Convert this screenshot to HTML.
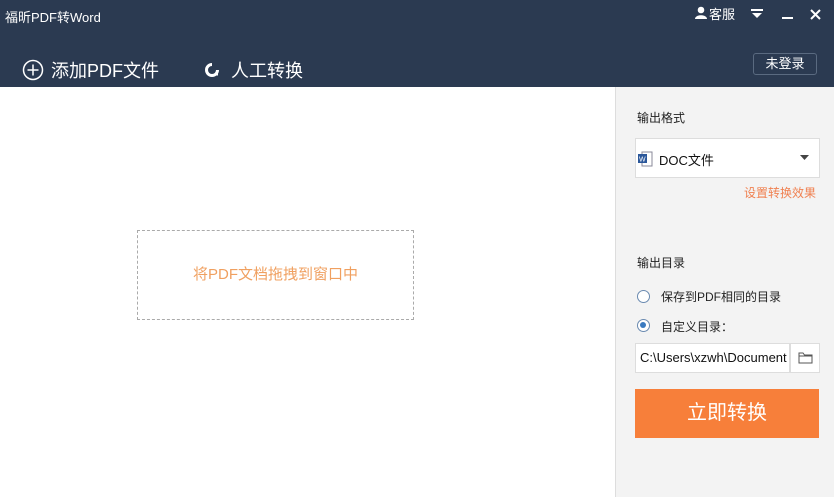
<!DOCTYPE html>
<html><head><meta charset="utf-8"><style>
*{margin:0;padding:0;box-sizing:border-box}
body{width:834px;height:497px;overflow:hidden;background:#fff;font-family:"Liberation Sans","Noto Sans CJK SC",sans-serif;position:relative}
.hd{position:absolute;left:0;top:0;width:834px;height:87px;background:#2b3a51;color:#fff}
.abs{position:absolute}
.rp{position:absolute;left:615px;top:87px;width:219px;height:410px;background:#f3f3f3;border-left:1px solid #ddd}
</style></head><body>
<div class="hd">
<div class="abs" style="left:5px;top:7px;font-size:13px">福昕PDF转Word</div>
<svg class="abs" style="left:22px;top:59px" width="22" height="22"><circle cx="11" cy="11" r="9.5" fill="none" stroke="#fff" stroke-width="1.5"/><path d="M11 5.5V16.5M5.5 11H16.5" stroke="#fff" stroke-width="1.5"/></svg>
<div class="abs" style="left:51px;top:57px;font-size:18px">添加PDF文件</div>
<svg class="abs" style="left:205px;top:63px" width="14" height="14"><path d="M7 1.5A5.5 5.5 0 1 0 12.5 7" fill="none" stroke="#fff" stroke-width="3"/><path d="M9 12.5l4 0 0-4z" fill="#fff"/></svg>
<div class="abs" style="left:231px;top:57px;font-size:18px">人工转换</div>
<svg class="abs" style="left:694px;top:6px" width="14" height="13"><circle cx="7" cy="4" r="3.3" fill="#fff"/><path d="M1 13C1 8 13 8 13 13z" fill="#fff"/></svg>
<div class="abs" style="left:709px;top:4px;font-size:13px">客服</div>
<svg class="abs" style="left:751px;top:9px" width="12" height="9"><rect x="0" y="0" width="12" height="2" fill="#fff"/><path d="M1 4H11L6 9z" fill="#fff"/></svg>
<div class="abs" style="left:782px;top:17px;width:11px;height:2px;background:#fff"></div>
<svg class="abs" style="left:810px;top:9px" width="11" height="11"><path d="M1 1L10 10M10 1L1 10" stroke="#fff" stroke-width="2"/></svg>
<div class="abs" style="left:753px;top:53px;width:64px;height:22px;border:1px solid #5a6a80;border-radius:3px;font-size:13px;text-align:center;line-height:20px">未登录</div>
</div>
<div class="abs" style="left:137px;top:230px;width:277px;height:90px;border:1px dashed #aaa;color:#f0a060;font-size:15px;text-align:center;line-height:88px">将PDF文档拖拽到窗口中</div>
<div class="rp">
<div class="abs" style="left:21px;top:22px;font-size:12px;color:#222">输出格式</div>
<div class="abs" style="left:19px;top:51px;width:185px;height:40px;background:#fff;border:1px solid #ddd"></div>
<svg class="abs" style="left:22px;top:64px" width="15" height="16"><rect x="4" y="1" width="10" height="14" fill="#fff" stroke="#889"/><rect x="0" y="3" width="9" height="9" fill="#2b579a"/><text x="1" y="10.5" font-size="7" fill="#fff" font-family="Liberation Sans">W</text></svg>
<div class="abs" style="left:43px;top:63px;font-size:13px;color:#111">DOC文件</div>
<svg class="abs" style="left:184px;top:68px" width="9" height="5"><path d="M0 0H9L4.5 5z" fill="#444"/></svg>
<div class="abs" style="left:128px;top:97px;font-size:12px;color:#f08050">设置转换效果</div>
<div class="abs" style="left:21px;top:167px;font-size:12px;color:#222">输出目录</div>
<div class="abs" style="left:21px;top:203px;width:13px;height:13px;border:1.5px solid #6a8ab0;border-radius:50%;background:#fff"></div>
<div class="abs" style="left:45px;top:201px;font-size:12px;color:#222">保存到PDF相同的目录</div>
<div class="abs" style="left:21px;top:232px;width:13px;height:13px;border:1.5px solid #6a8ab0;border-radius:50%;background:#fff"><div style="margin:2px;width:6px;height:6px;border-radius:50%;background:#3a7ac0"></div></div>
<div class="abs" style="left:45px;top:231px;font-size:12px;color:#222">自定义目录：</div>
<div class="abs" style="left:19px;top:256px;width:155px;height:30px;background:#fff;border:1px solid #ddd;font-size:13px;line-height:28px;padding-left:4px;color:#111;overflow:hidden;white-space:nowrap">C:\Users\xzwh\Document</div>
<div class="abs" style="left:174px;top:256px;width:30px;height:30px;background:#fff;border:1px solid #ddd"></div>
<svg class="abs" style="left:182px;top:264px" width="15" height="13"><path d="M1 2H5L6.5 4H14V12H1z M1 5H14" fill="none" stroke="#555"/></svg>
<div class="abs" style="left:19px;top:302px;width:184px;height:49px;background:#f77f3a;color:#fff;font-size:20px;text-align:center;line-height:49px">立即转换</div>
</div>
</body></html>
